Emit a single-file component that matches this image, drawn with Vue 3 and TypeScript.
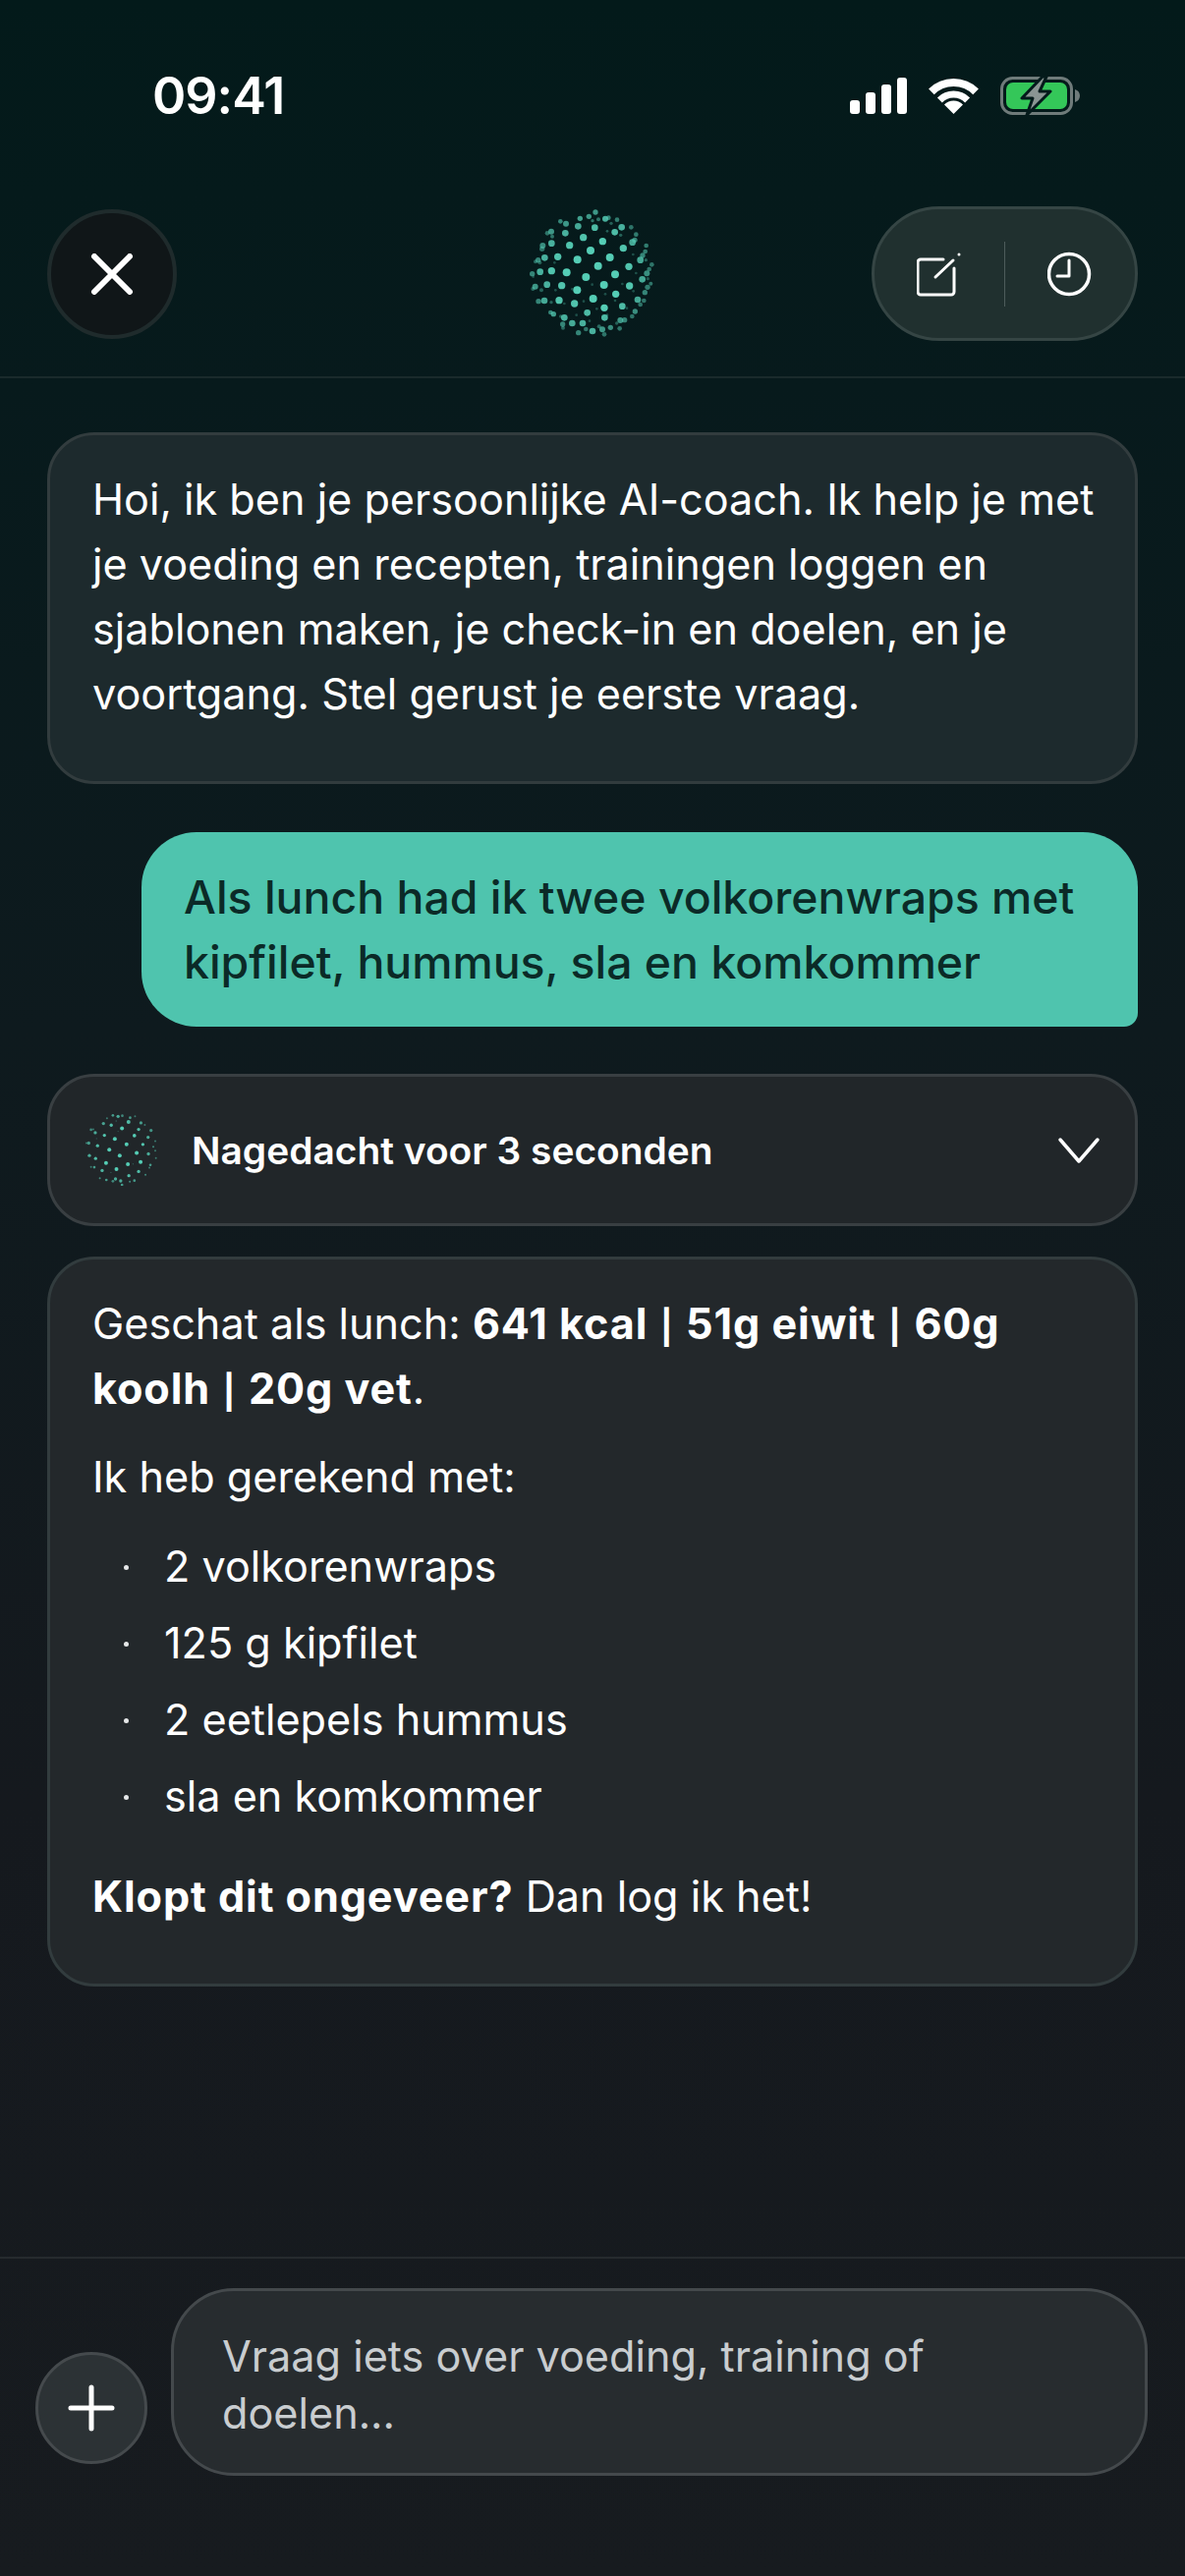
<script setup lang="ts">
type Dot = [number, number, number, number?]

const bigDots: Dot[] = [
  [318,78,8,.7],[271,97,8,.75],[298,91,8,.7],[348,98,9,.85],[358,95,7,.6],[384,101,7,.55],[211,106,7,.6],[228,113,9,.7],
  [309,104,5,.5],[327,100,6,.5],[366,112,5,.4],[265,121,10,.8],[316,125,10,.9],[398,124,10,.85],[427,124,7,.5],[183,137,9,.7],
  [171,142,7,.5],[226,142,10,.85],[377,139,10,.9],[354,136,4,.4],[442,146,7,.55],[395,148,5,.4],[186,152,6,.5],[281,155,11,.95],
  [340,167,11],[431,170,10,.8],[438,163,8,.6],[184,173,10,.85],[239,179,11,.95],[157,180,9,.65],[155,190,8,.5],[473,180,7,.55],
  [403,188,11,.95],[303,195,12],[470,198,7,.55],[462,210,8,.6],[163,217,10,.85],[203,214,11,.95],[362,216,12],[263,223,12],
  [455,224,10,.8],[143,224,8,.6],[135,229,6,.45],[148,232,6,.4],[472,224,5,.4],[433,207,4,.3],[193,232,4,.3],[326,242,12],
  [420,244,11,.95],[490,238,7,.5],[482,252,7,.5],[184,257,11,.95],[149,260,10,.85],[125,266,8,.6],[230,262,12],[378,268,12],
  [475,265,9,.65],[442,264,4,.3],[128,275,4,.3],[289,276,12],[461,283,10,.8],[478,281,5,.35],[170,299,10,.85],[215,302,11,.95],
  [344,300,12],[422,303,11,.95],[487,296,6,.5],[477,307,8,.55],[134,305,9,.7],[127,312,6,.45],[153,316,6,.4],[262,316,12],
  [469,323,8,.6],[196,316,4,.3],[400,297,4,.3],[308,299,4,.3],[247,313,4,.3],[434,319,4,.3],[380,328,11],[348,328,4,.3],
  [311,342,12],[447,345,10,.8],[466,348,7,.5],[207,347,11,.95],[162,348,10,.8],[144,350,8,.6],[183,353,5,.4],[455,360,7,.5],
  [254,357,11,.95],[223,357,4,.3],[282,350,4,.3],[378,348,4,.3],[345,370,11],[400,365,10,.9],[414,371,4,.3],[322,373,4,.3],
  [181,384,7,.6],[190,389,8,.75],[293,385,10,.9],[439,381,8,.65],[430,396,7,.5],[260,392,4,.3],[223,400,10,.85],[346,400,10,.9],
  [212,396,5,.4],[354,392,4,.3],[394,408,9,.7],[407,407,8,.6],[383,417,5,.4],[300,410,4,.3],[247,417,10,.8],[279,417,10,.85],
  [218,420,8,.6],[219,431,6,.45],[364,430,8,.65],[392,433,7,.5],[329,427,6,.45],[339,436,9,.7],[289,435,7,.5],[309,441,10,.85],
  [345,451,7,.5],[266,446,8,.6]
]

const smallDots: Dot[] = [
  [254,169,4,.7],[270,172,5,.8],[283,170,4,.6],[236,178,3,.5],[307,176,4,.7],[322,172,3,.5],[225,194,5,.75],[249,199,5,.9],
  [302,189,6,.9],[340,192,5,.7],[352,198,3,.5],[264,186,2,.4],[187,213,4,.6],[194,212,3,.5],[200,222,5,.8],[282,209,6],
  [333,212,5,.9],[371,215,5,.65],[228,230,5,.95],[320,231,5.5],[362,236,5,.8],[384,248,3,.5],[260,241,6],[180,254,5,.7],
  [173,254,3,.5],[207,262,5,.9],[296,258,6],[346,258,5,.95],[378,265,3,.6],[243,274,6],[327,284,6],[363,287,5,.8],
  [384,277,3,.5],[182,292,5,.8],[275,292,6],[201,301,5,.9],[386,300,3,.5],[233,315,6],[300,319,6],[339,312,6],
  [369,321,4,.7],[366,329,3,.5],[187,327,3,.5],[197,328,4,.7],[265,334,6],[221,338,5,.85],[333,341,5,.9],[354,351,3,.6],
  [303,354,5,.9],[214,362,3,.6],[234,367,4,.7],[262,364,5,.8],[254,371,4,.6],[278,370,5,.8],[306,372,3,.6],[320,369,4,.7],
  [282,382,4,.7],[204,240,2,.3],[270,218,2,.3],[248,344,2,.3],[316,318,2,.3]
]

const items = ['2 volkorenwraps', '125 g kipfilet', '2 eetlepels hummus', 'sla en komkommer']
</script>

<template>
  <div class="screen">
    <header class="top">
      <div class="status">
        <span class="time">09:41</span>
        <div class="status-icons">
          <svg width="58" height="37" viewBox="0 0 58 37" fill="#fff">
            <rect x="0" y="23" width="10" height="14" rx="3" />
            <rect x="16" y="15" width="10" height="22" rx="3" />
            <rect x="32" y="7" width="10" height="30" rx="3" />
            <rect x="48" y="0" width="10" height="37" rx="3" />
          </svg>
          <svg width="51" height="37" viewBox="0 0 51 37" fill="none" stroke="#fff">
            <path d="M2.9 14.4A32 32 0 0 1 48.1 14.4" stroke-width="8" />
            <path d="M11.4 22.9A20 20 0 0 1 39.6 22.9" stroke-width="7" />
            <path d="M25.5 37L16 27.5A13.4 13.4 0 0 1 35 27.5Z" fill="#fff" stroke="none" />
          </svg>
          <svg width="82" height="41" viewBox="0 0 82 41">
            <rect x="1.5" y="2.5" width="71" height="36" rx="11" fill="none" stroke="#6f7b7a" stroke-width="3" />
            <rect x="6" y="7" width="62" height="27" rx="7" fill="#34c759" />
            <path d="M76 14c3 1 5 3 5 6.500s-2 5.500-5 6.500z" fill="#6f7b7a" />
            <path d="M43 1L22 23H33L27 40L51 16H40L47 1Z" fill="#8a9593" stroke="#041a1b" stroke-width="3" stroke-linejoin="round" />
          </svg>
        </div>
      </div>
      <nav class="nav">
        <button type="button" class="close">
          <svg width="44" height="42" viewBox="0 0 44 42" fill="none" stroke="#fff" stroke-width="6" stroke-linecap="round">
            <path d="M4 3L40 39M40 3L4 39" />
          </svg>
        </button>
        <svg class="orb" width="200" height="170" viewBox="0 0 600 510">
          <circle v-for="(d, i) in bigDots" :key="i" :cx="d[0]" :cy="d[1]" :r="d[2]" :opacity="d[3] ?? 1" fill="#55cdb5" />
        </svg>
        <div class="actions">
          <button type="button" class="action">
            <svg width="46" height="46" viewBox="0 0 46 46" fill="none" stroke="#fff" stroke-width="3" stroke-linecap="round" stroke-linejoin="round">
              <path d="M27 8H4a3 3 0 0 0-3 3v30a3 3 0 0 0 3 3h31a3 3 0 0 0 3-3V17" />
              <path d="M19 26L37 9" />
              <circle cx="43" cy="3" r="1.500" fill="#fff" stroke="none" />
            </svg>
          </button>
          <span class="divider"></span>
          <button type="button" class="action">
            <svg width="46" height="46" viewBox="0 0 46 46" fill="none" stroke="#fff" stroke-width="3.500" stroke-linecap="round" stroke-linejoin="round">
              <circle cx="22" cy="23" r="20.500" />
              <path d="M22 9V25H10" stroke-width="3" />
            </svg>
          </button>
        </div>
      </nav>
    </header>

    <main class="chat">
      <section class="bubble intro">
        Hoi, ik ben je persoonlijke AI-coach. Ik help je met je voeding en recepten, trainingen loggen en sjablonen maken, je check-in en doelen, en je voortgang. Stel gerust je eerste vraag.
      </section>

      <section class="user">
        Als lunch had ik twee volkorenwraps met kipfilet, hummus, sla en komkommer
      </section>

      <section class="thinking">
        <svg width="73" height="73" viewBox="170 165 220 220">
          <circle v-for="(d, i) in smallDots" :key="i" :cx="d[0]" :cy="d[1]" :r="d[2]" :opacity="d[3] ?? 1" fill="#55cdb5" />
        </svg>
        <span class="thinking-label">Nagedacht voor 3 seconden</span>
        <svg class="chevron" width="44" height="28" viewBox="0 0 44 28" fill="none" stroke="#fff" stroke-width="3.500" stroke-linecap="round" stroke-linejoin="round">
          <path d="M3 3L22 25L41 3" />
        </svg>
      </section>

      <section class="bubble answer">
        <p>Geschat als lunch: <strong>641 kcal <span class="sep">|</span> 51g eiwit <span class="sep">|</span> 60g koolh <span class="sep">|</span> 20g vet</strong>.</p>
        <p class="lead">Ik heb gerekend met:</p>
        <ul>
          <li v-for="item in items" :key="item">{{ item }}</li>
        </ul>
        <p class="closing"><strong>Klopt dit ongeveer?</strong> Dan log ik het!</p>
      </section>
    </main>

    <footer class="composer">
      <button type="button" class="plus">
        <svg width="48" height="48" viewBox="0 0 48 48" fill="none" stroke="#fff" stroke-width="5" stroke-linecap="round">
          <path d="M24 3V45M3 24H45" />
        </svg>
      </button>
      <div class="input">Vraag iets over voeding, training of doelen...</div>
    </footer>
  </div>
</template>

<style>
html,
body {
  margin: 0;
  background: #171b1f;
}
</style>

<style scoped>
.screen {
  width: 1206px;
  height: 2622px;
  display: flex;
  flex-direction: column;
  overflow: hidden;
  font-family: Inter, "Liberation Sans", sans-serif;
  color: #fff;
  background: linear-gradient(180deg, #031a1a 0%, #071a1c 15%, #0e1a1e 40%, #15191e 70%, #171b1f 100%);
}

button {
  padding: 0;
  border: none;
  background: none;
  color: inherit;
  display: flex;
  align-items: center;
  justify-content: center;
}

.top {
  height: 385px;
  flex: none;
  box-sizing: border-box;
  border-bottom: 2px solid #1a2a2b;
}

.status {
  height: 190px;
  box-sizing: border-box;
  padding: 4px 106px 0 155px;
  display: flex;
  align-items: center;
  justify-content: space-between;
}

.time {
  font-size: 52px;
  font-weight: 600;
  letter-spacing: -1px;
}

.status-icons {
  display: flex;
  align-items: center;
  gap: 22px;
}

.nav {
  padding: 0 48px;
  display: grid;
  grid-template-columns: 1fr auto 1fr;
  align-items: center;
}

.close {
  width: 132px;
  height: 132px;
  margin-top: 8px;
  box-sizing: border-box;
  border-radius: 50%;
  background: #101618;
  border: 4px solid #1f2b2c;
}

.orb {
  display: block;
  margin-right: 6px;
}

.actions {
  justify-self: end;
  width: 271px;
  height: 137px;
  margin-top: 7px;
  box-sizing: border-box;
  border-radius: 69px;
  background: #20302f;
  border: 3px solid #354544;
  display: flex;
  align-items: center;
}

.action {
  flex: 1;
  height: 100%;
}

.divider {
  width: 1px;
  height: 66px;
  background: #4d5c5b;
}

.chat {
  flex: 1;
  padding: 55px 48px 0;
  display: flex;
  flex-direction: column;
}

.bubble {
  box-sizing: border-box;
  border: 3px solid #323c3e;
  border-radius: 48px;
  padding: 32px 38px 56px 43px;
  font-size: 43.200px;
  line-height: 66px;
}

.intro {
  background: #1d2a2d;
}

.user {
  margin: 49px 0 0 96px;
  padding: 33px 43px;
  background: #4fc4ae;
  border-radius: 56px 56px 14px 56px;
  color: #0b2a27;
  font-size: 46.400px;
  line-height: 66px;
  font-weight: 500;
}

.thinking {
  margin-top: 48px;
  height: 155px;
  box-sizing: border-box;
  padding: 0 35px 0 36px;
  border: 3px solid #393f42;
  border-radius: 48px;
  background: #212629;
  display: flex;
  align-items: center;
}

.thinking-label {
  margin-left: 35px;
  flex: 1;
  font-size: 38.900px;
  font-weight: 600;
}

.answer {
  margin-top: 31px;
  background: #23282b;
}

.answer p {
  margin: 0;
}

.answer strong {
  font-weight: 700;
  letter-spacing: 0.9px;
}

.sep {
  font-size: 34px;
  line-height: 0;
  margin: 0 1.500px;
}

.answer .lead {
  margin-top: 24px;
}

.answer ul {
  list-style: none;
  margin: 25px 0 0;
  padding: 0 0 0 73px;
  display: flex;
  flex-direction: column;
  gap: 12px;
}

.answer li {
  position: relative;
}

.answer li::before {
  content: "";
  position: absolute;
  left: -41px;
  top: 32px;
  width: 5px;
  height: 5px;
  border-radius: 50%;
  background: #e5e7e8;
}

.answer .closing {
  margin-top: 36px;
}

.composer {
  height: 325px;
  flex: none;
  box-sizing: border-box;
  border-top: 2px solid #262b2e;
  padding: 29px 38px 0 36px;
  display: flex;
  align-items: flex-end;
  gap: 24px;
}

.plus {
  width: 114px;
  height: 114px;
  flex: none;
  box-sizing: border-box;
  margin-bottom: 114px;
  border-radius: 50%;
  background: #2c3235;
  border: 3px solid #454a4d;
}

.input {
  flex: 1;
  height: 191px;
  box-sizing: border-box;
  margin-bottom: 102px;
  padding: 37px 110px 0 49px;
  border: 3px solid #44494c;
  border-radius: 64px;
  background: #272c2f;
  color: #c9cdd0;
  font-size: 43.200px;
  line-height: 58px;
}
</style>
